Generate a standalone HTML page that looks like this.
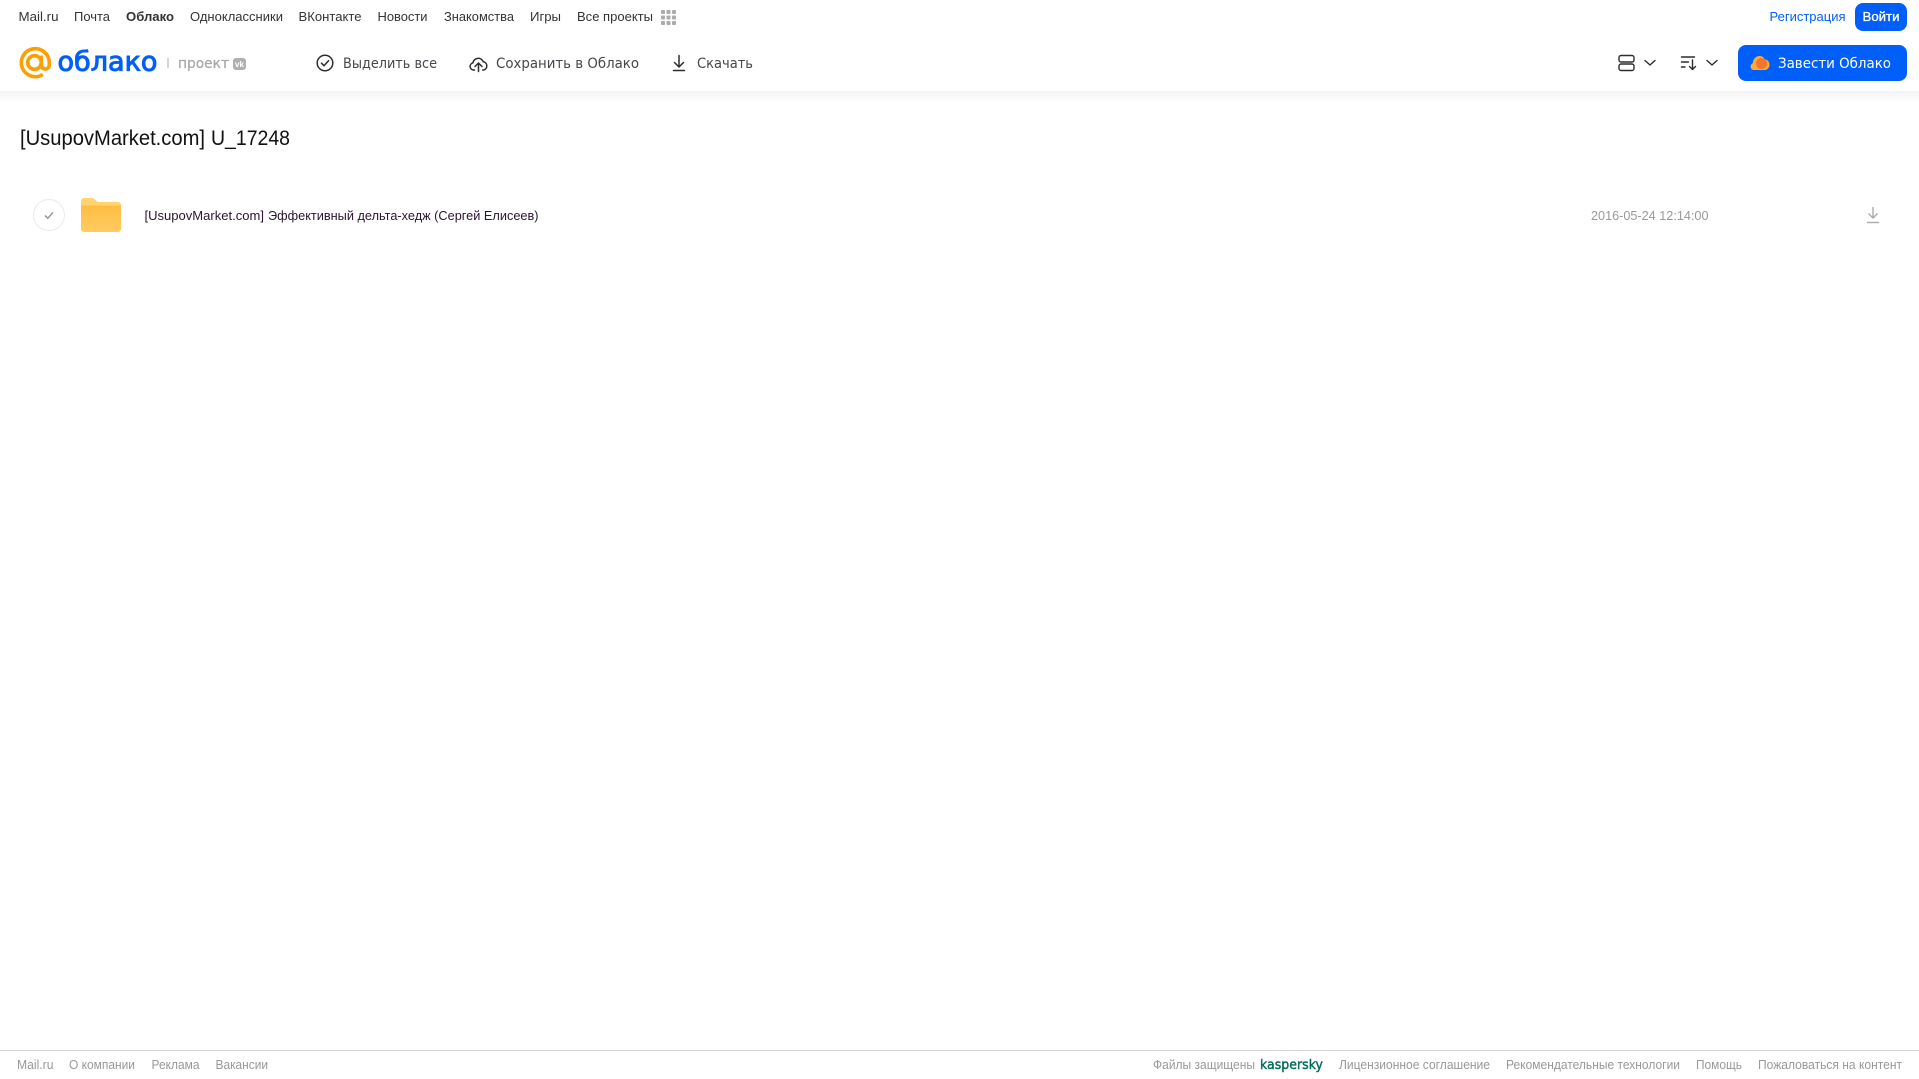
<!DOCTYPE html>
<html lang="ru">
<head>
<meta charset="utf-8">
<title>[UsupovMarket.com] U_17248</title>
<style>
html,body{margin:0;padding:0;width:1919px;height:1079px;overflow:hidden;background:#fff}
svg{display:block;position:absolute;left:0;top:0}
text{font-family:"Liberation Sans",Arial,sans-serif}
.n{font-size:13px;fill:#333}
.a{font-family:"DejaVu Sans",sans-serif;font-size:14.5px;fill:#44474c}
.f{font-size:12.5px;fill:#999}
</style>
</head>
<body>
<svg width="1919" height="1079" viewBox="0 0 1919 1079" xmlns="http://www.w3.org/2000/svg">
<defs>
<linearGradient id="sh" x1="0" y1="0" x2="0" y2="1"><stop offset="0" stop-color="#f3f3f3"/><stop offset="1" stop-color="#fff"/></linearGradient>
<linearGradient id="fo" x1="0" y1="0" x2="0" y2="1"><stop offset="0" stop-color="#ffbd42"/><stop offset="1" stop-color="#ffcb62"/></linearGradient>
</defs>
<rect x="0" y="91" width="1919" height="11" fill="url(#sh)"/>

<!-- top nav -->
<text class="n" x="18.5" y="21" textLength="40" lengthAdjust="spacingAndGlyphs">Mail.ru</text>
<text class="n" x="74" y="21" textLength="36" lengthAdjust="spacingAndGlyphs">Почта</text>
<text class="n" x="126" y="21" textLength="48" lengthAdjust="spacingAndGlyphs" font-weight="700">Облако</text>
<text class="n" x="190" y="21" textLength="93" lengthAdjust="spacingAndGlyphs">Одноклассники</text>
<text class="n" x="298.500" y="21" textLength="63" lengthAdjust="spacingAndGlyphs">ВКонтакте</text>
<text class="n" x="377.500" y="21" textLength="50" lengthAdjust="spacingAndGlyphs">Новости</text>
<text class="n" x="444" y="21" textLength="70" lengthAdjust="spacingAndGlyphs">Знакомства</text>
<text class="n" x="530" y="21" textLength="31" lengthAdjust="spacingAndGlyphs">Игры</text>
<text class="n" x="577" y="21" textLength="76" lengthAdjust="spacingAndGlyphs">Все проекты</text>
<g fill="#ababab">
<rect x="661" y="10" width="4" height="4" rx="1"/><rect x="666.500" y="10" width="4" height="4" rx="1"/><rect x="672" y="10" width="4" height="4" rx="1"/>
<rect x="661" y="15.500" width="4" height="4" rx="1"/><rect x="666.500" y="15.500" width="4" height="4" rx="1"/><rect x="672" y="15.500" width="4" height="4" rx="1"/>
<rect x="661" y="21" width="4" height="4" rx="1"/><rect x="666.500" y="21" width="4" height="4" rx="1"/><rect x="672" y="21" width="4" height="4" rx="1"/>
</g>
<text x="1769.500" y="21" font-size="13" fill="#005ff9" textLength="76" lengthAdjust="spacingAndGlyphs">Регистрация</text>
<rect x="1855" y="3" width="52" height="28" rx="8" fill="#005ff9"/>
<text x="1862.500" y="21" font-size="13" fill="#fff" stroke="#fff" stroke-width=".3" textLength="37" lengthAdjust="spacingAndGlyphs">Войти</text>

<!-- logo -->
<g fill="none" stroke="#ff9e00" stroke-width="3.600">
<circle cx="34.500" cy="62.500" r="6.800"/>
<path d="M41.300 55.500v9.500a4 4 0 0 0 8 0v-2.500a14 14 0 1 0-6.500 12"/>
</g>
<text x="57.500" y="70.500" font-size="27" fill="#005ff9" stroke="#005ff9" stroke-width="1" textLength="100" lengthAdjust="spacingAndGlyphs" style="font-family:'DejaVu Sans',sans-serif">облако</text>
<rect x="167.500" y="58" width="1" height="10" fill="#aaa"/>
<text x="178" y="68" font-size="14" fill="#a8a8a8" stroke="#a8a8a8" stroke-width=".25" textLength="51" lengthAdjust="spacingAndGlyphs" style="font-family:'DejaVu Sans',sans-serif">проект</text>
<rect x="233" y="58" width="13" height="12" rx="3" fill="#b0b0b0"/>
<text x="235" y="67" font-size="8" font-weight="700" fill="#fff" textLength="9" lengthAdjust="spacingAndGlyphs">vk</text>

<!-- actions -->
<g fill="none" stroke="#2c2d2e" stroke-width="1.500" stroke-linecap="round" stroke-linejoin="round">
<circle cx="325" cy="63" r="7.800"/>
<path d="M321.500 63.200l2.500 2.500 4.500-5"/>
<path d="M474.500 70h-1a3.600 3.600 0 0 1-.6-7.100 5.400 5.400 0 0 1 10.400-1.100 4.200 4.200 0 0 1 .4 8.200h-1"/>
<path d="M478.500 71.500v-8M475 66.500l3.500-3.500 3.500 3.500"/>
<path d="M679 55.500v11.500M674.500 62.500l4.500 4.500 4.500-4.500"/>
<path d="M673.500 70.500h11"/>
</g>
<text class="a" x="343" y="68" textLength="94" lengthAdjust="spacingAndGlyphs">Выделить все</text>
<text class="a" x="496" y="68" textLength="143" lengthAdjust="spacingAndGlyphs">Сохранить в Облако</text>
<text class="a" x="697" y="68" textLength="56" lengthAdjust="spacingAndGlyphs">Скачать</text>

<!-- view / sort -->
<g fill="none" stroke="#2c2d2e" stroke-width="1.400" stroke-linecap="round" stroke-linejoin="round">
<rect x="1619" y="55.500" width="15" height="6.500" rx="2"/>
<rect x="1619" y="64" width="15" height="6.500" rx="2"/>
<path d="M1645 60.500l5 4.500 5-4.500"/>
<path d="M1681.500 57h13M1681.500 62h7M1681.500 67h3.500M1692.500 60v9M1689.500 66.500l3 3 3-3"/>
<path d="M1707 60.500l5 4.500 5-4.500"/>
</g>

<!-- CTA -->
<rect x="1738" y="45" width="169" height="36" rx="8" fill="#005ff9"/>
<path d="M1754 70c-4 0-4.500-5.500-1.200-6.800.2-4.200 3.300-7.200 6.700-7.200 2.700 0 4.300 1.400 5.200 3.200 3 .3 4.800 2.800 4.800 5.500 0 3-2.300 5.300-5 5.300z" fill="#ffa930"/>
<circle cx="1761.500" cy="63.500" r="5.500" fill="#f4762c"/>
<text x="1778" y="68" font-size="14.500" fill="#fff" textLength="113" lengthAdjust="spacingAndGlyphs" style="font-family:'DejaVu Sans',sans-serif">Завести Облако</text>

<!-- title -->
<text x="20" y="145" font-size="21" fill="#111" textLength="185" lengthAdjust="spacingAndGlyphs">[UsupovMarket.com]</text>
<text x="211" y="145" font-size="21" fill="#111" textLength="79" lengthAdjust="spacingAndGlyphs">U_17248</text>

<!-- row -->
<circle cx="49" cy="215" r="15.500" fill="#fff" stroke="#ebebeb"/>
<path d="M45 215.500l2.800 2.800 5.200-5.800" fill="none" stroke="#999" stroke-width="1.500"/>
<path d="M81 201a3 3 0 0 1 3-3h7c2.500 0 3.500 1 5 2.500s2 1.500 4 1.500h18a3 3 0 0 1 3 3v8H81z" fill="#ffd36e"/>
<path d="M81 205.500h40V229a3 3 0 0 1-3 3H84a3 3 0 0 1-3-3z" fill="url(#fo)"/>
<text x="144.500" y="220" font-size="13" fill="#2a1430" textLength="119.500" lengthAdjust="spacingAndGlyphs">[UsupovMarket.com]</text>
<text x="268" y="220" font-size="13" fill="#2a1430" textLength="270.500" lengthAdjust="spacingAndGlyphs">Эффективный дельта-хедж (Сергей Елисеев)</text>
<text x="1591" y="220" font-size="12.500" fill="#999" textLength="117.500" lengthAdjust="spacingAndGlyphs">2016-05-24 12:14:00</text>
<g fill="none" stroke="#aaa" stroke-width="1.400">
<path d="M1873 207v11M1868.500 213.500l4.500 4.500 4.500-4.500"/>
<path d="M1867 222.500h12"/>
</g>

<!-- footer -->
<rect x="0" y="1050" width="1919" height="1" fill="#d8d8d8"/>
<text class="f" x="17" y="1069" textLength="36.500" lengthAdjust="spacingAndGlyphs">Mail.ru</text>
<text class="f" x="69" y="1069" textLength="66" lengthAdjust="spacingAndGlyphs">О компании</text>
<text class="f" x="151.500" y="1069" textLength="48" lengthAdjust="spacingAndGlyphs">Реклама</text>
<text class="f" x="215.500" y="1069" textLength="52.500" lengthAdjust="spacingAndGlyphs">Вакансии</text>
<text class="f" x="1153" y="1069" textLength="102" lengthAdjust="spacingAndGlyphs">Файлы защищены</text>
<text x="1260" y="1069" font-size="13" fill="#006d5c" stroke="#006d5c" stroke-width=".4" textLength="63" lengthAdjust="spacingAndGlyphs" style="font-family:'DejaVu Sans',sans-serif">kaspersky</text>
<text class="f" x="1339" y="1069" textLength="151" lengthAdjust="spacingAndGlyphs">Лицензионное соглашение</text>
<text class="f" x="1506" y="1069" textLength="174" lengthAdjust="spacingAndGlyphs">Рекомендательные технологии</text>
<text class="f" x="1696" y="1069" textLength="46" lengthAdjust="spacingAndGlyphs">Помощь</text>
<text class="f" x="1758" y="1069" textLength="144" lengthAdjust="spacingAndGlyphs">Пожаловаться на контент</text>
</svg>
</body>
</html>
